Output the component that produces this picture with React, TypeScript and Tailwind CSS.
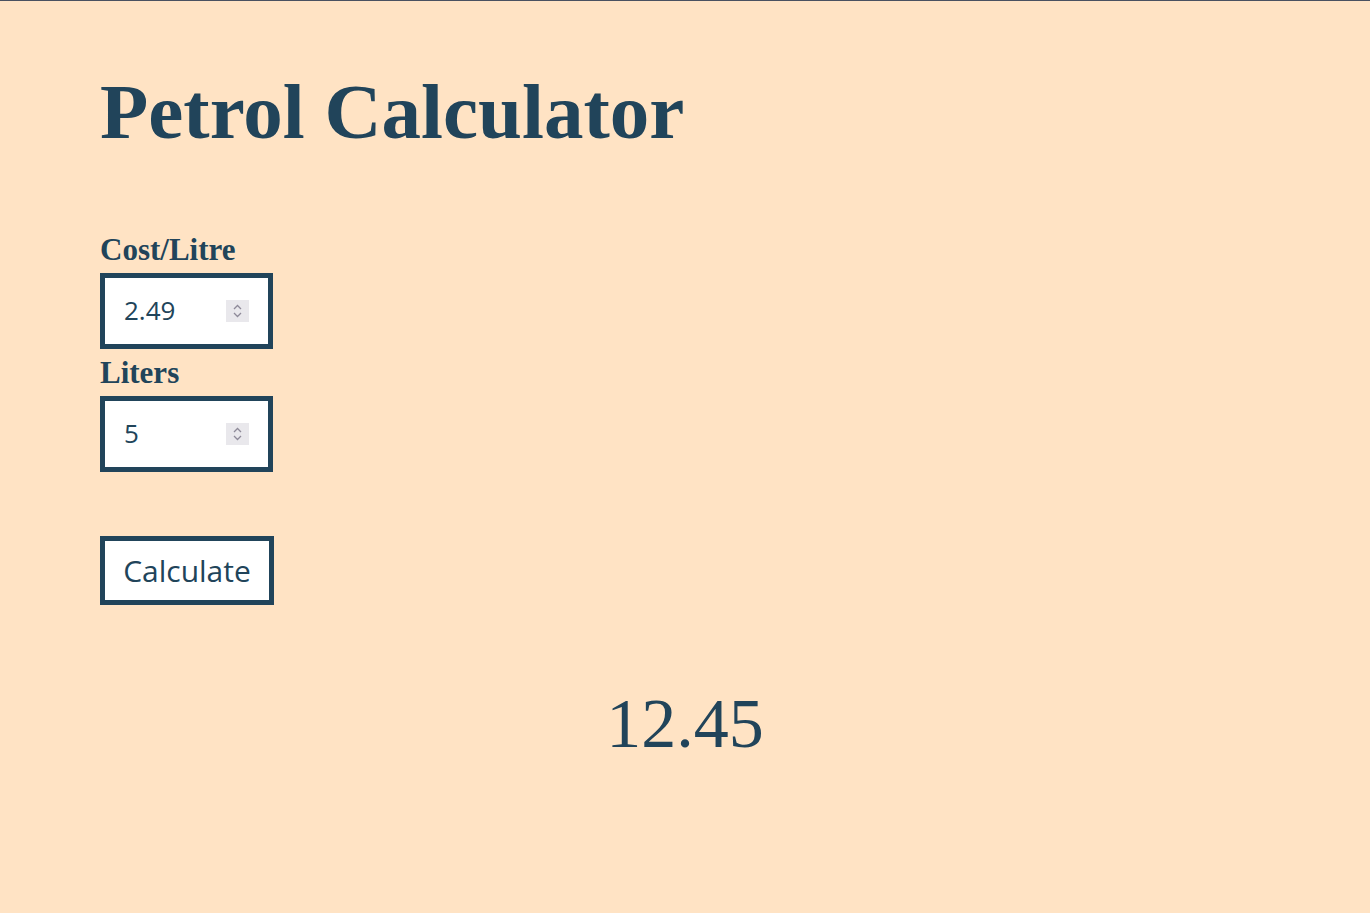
import { useState } from 'react';

function NumberBox({ value, onChange }: { value: string; onChange: (v: string) => void }) {
  return (
    <div className="flex h-[76px] w-[173px] items-center border-[5px] border-[#21445a] bg-white pl-[19px] pr-[19px]">
      <input
        type="text"
        value={value}
        onChange={(e) => onChange(e.target.value)}
        className="w-full min-w-0 flex-1 bg-transparent text-[26px] text-[#21445a] outline-none"
        style={{ fontFamily: '"Open Sans", "Noto Sans", sans-serif' }}
      />
      <div className="flex h-[22px] w-[23px] shrink-0 flex-col items-center justify-center bg-[#e9e8ec]">
        <svg width="9" height="16" viewBox="0 0 9 16" fill="none" stroke="#8e8a99" strokeWidth="1.3">
          <path d="M1 6 L4.5 2.5 L8 6" />
          <path d="M1 10 L4.5 13.5 L8 10" />
        </svg>
      </div>
    </div>
  );
}

export default function App() {
  const [cost, setCost] = useState('2.49');
  const [liters, setLiters] = useState('5');
  const [result, setResult] = useState('12.45');

  const calculate = () => {
    const c = parseFloat(cost);
    const l = parseFloat(liters);
    if (isNaN(c) || isNaN(l)) return;
    setResult((c * l).toFixed(2));
  };

  return (
    <div
      className="min-h-[913px] border-t border-[#4a5160] bg-[#ffe3c4] text-[#21445a]"
      style={{ fontFamily: '"Liberation Serif", "Times New Roman", serif' }}
    >
      <div className="px-[100px]">
        <h1 className="pt-[64px] text-[79px] font-bold leading-[1.2]">Petrol Calculator</h1>

        <div className="mt-[72px] flex flex-col items-start">
          <label className="text-[31px] font-bold leading-[36px]">Cost/Litre</label>
          <div className="mt-[5px]">
            <NumberBox value={cost} onChange={setCost} />
          </div>
          <label className="mt-[6px] text-[31px] font-bold leading-[36px]">Liters</label>
          <div className="mt-[5px]">
            <NumberBox value={liters} onChange={setLiters} />
          </div>

          <button
            onClick={calculate}
            className="mt-[64px] h-[69px] w-[174px] border-[5px] border-[#21445a] bg-white text-[30px] text-[#21445a]"
            style={{ fontFamily: '"Open Sans", "Noto Sans", sans-serif' }}
          >
            Calculate
          </button>
        </div>
      </div>

      <div className="mt-[84px] text-center text-[70px] leading-none">{result}</div>
    </div>
  );
}
